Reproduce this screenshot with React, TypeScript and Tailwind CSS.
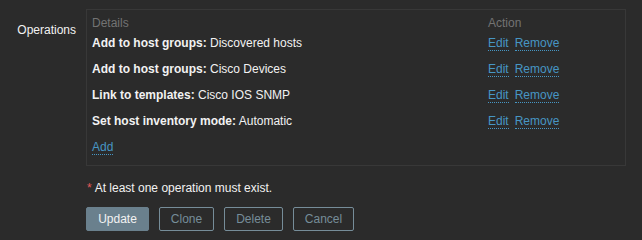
import React from "react";

const rows = [
  { label: "Add to host groups:", value: "Discovered hosts" },
  { label: "Add to host groups:", value: "Cisco Devices" },
  { label: "Link to templates:", value: "Cisco IOS SNMP" },
  { label: "Set host inventory mode:", value: "Automatic" },
];

function Link({ children, className = "" }: { children: React.ReactNode; className?: string }) {
  return (
    <span className={`text-[#4796c4] border-b border-dotted border-[#4796c4] leading-[14px] ${className}`}>
      {children}
    </span>
  );
}

export default function App() {
  return (
    <div
      className="w-[642px] h-[240px] bg-[#2b2b2b] text-[#f2f2f2] text-[12px] leading-[14px] pt-[9px]"
      style={{ fontFamily: '"Liberation Sans", Arial, sans-serif' }}
    >
      <div className="flex">
        <div className="w-[76px] text-right pt-[14px]">Operations</div>
        <div className="ml-[10px] flex flex-col">
          <div className="w-[540px] h-[157px] border border-[#383838] px-[5px] pt-[6px]">
            <div className="flex h-[14px] text-[#737373]">
              <div className="w-[396px]">Details</div>
              <div>Action</div>
            </div>
            {rows.map((r, i) => (
              <div key={i} className="flex h-[26px] items-center">
                <div className="w-[396px]">
                  <span className="font-bold">{r.label}</span> {r.value}
                </div>
                <div className="flex">
                  <Link>Edit</Link>
                  <Link className="ml-[6px]">Remove</Link>
                </div>
              </div>
            ))}
            <div className="flex h-[26px] items-center">
              <Link>Add</Link>
            </div>
          </div>
          <div className="mt-[15px] flex items-center h-[14px]">
            <span className="text-[#e45959] mr-[3px] ml-[1px]">*</span>
            <span>At least one operation must exist.</span>
          </div>
          <div className="mt-[12px] flex gap-[10px]">
            <button className="w-[63px] h-[24px] border border-[#6a808d] bg-[#6a808d] text-[#f2f2f2] rounded-[2px]">
              Update
            </button>
            <button className="w-[55px] h-[24px] border border-[#768d99] text-[#768d99] rounded-[2px]">
              Clone
            </button>
            <button className="w-[59px] h-[24px] border border-[#768d99] text-[#768d99] rounded-[2px]">
              Delete
            </button>
            <button className="w-[61px] h-[24px] border border-[#768d99] text-[#768d99] rounded-[2px]">
              Cancel
            </button>
          </div>
        </div>
      </div>
    </div>
  );
}
